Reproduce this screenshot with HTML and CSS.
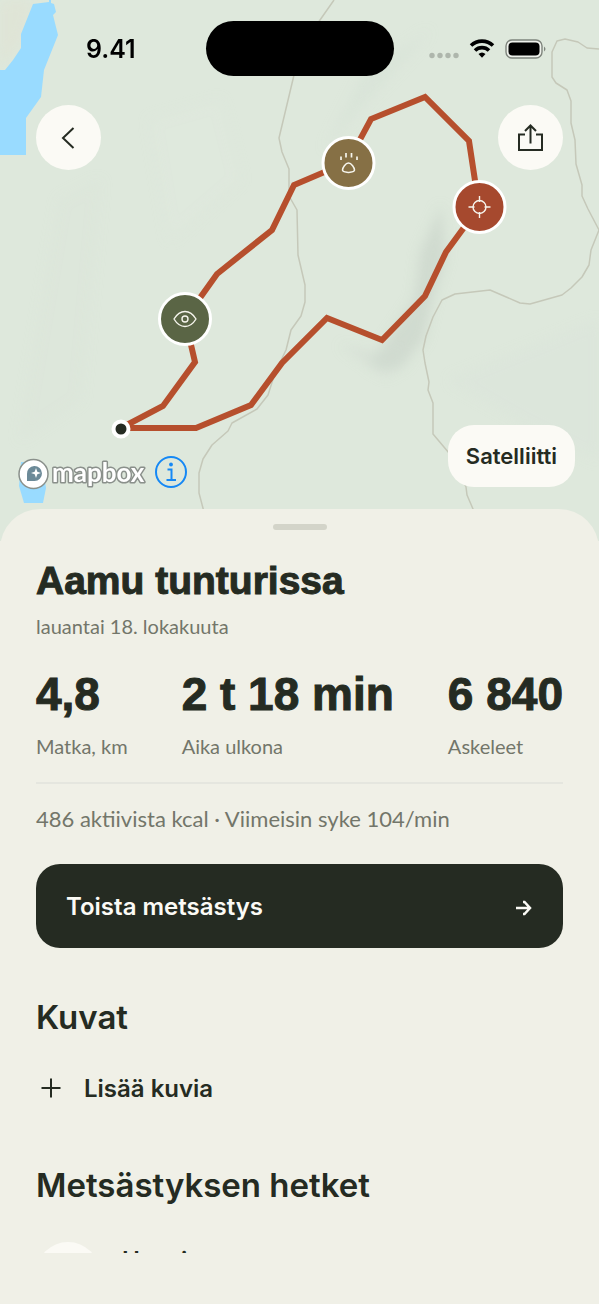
FILE: index.html
```html
<!DOCTYPE html>
<html lang="fi">
<head>
    <meta charset="UTF-8">
    <meta name="viewport" content="width=device-width, initial-scale=1.0">
    <title>Aamu tunturissa</title>
    <link rel="stylesheet" href="styles.css">
</head>
<body>
    <div class="app">
        <!-- Map with the route -->
        <section class="map">
            <svg class="map-canvas" viewBox="0 0 599 541" preserveAspectRatio="xMidYMin slice" aria-hidden="true">
                <defs>
                    <filter id="soft" x="-30%" y="-30%" width="160%" height="160%">
                        <feGaussianBlur stdDeviation="6"/>
                    </filter>
                </defs>
                <rect width="599" height="541" fill="#dee8dc"/>
                <!-- Terrain shading -->
                <g filter="url(#soft)">
                    <path d="M0 0h34L22 42 0 68z" fill="#dfe4d6"/>
                    <path d="M441 205L420 252 414 300 386 340 370 368 400 368 424 340 433 300 446 258z" fill="#c9d4ca" opacity=".65"/>
                    <path d="M340 345L386 376 408 362 398 345 370 352z" fill="#d0dad0" opacity=".6"/>
                    <path d="M430 30L395 70 350 120 325 150 360 80z" fill="#d7e2d7" opacity=".7"/>
                    <path d="M450 380L599 320V460L520 420z" fill="#dae5da" opacity=".6"/>
                    <path d="M60 200L100 180 80 400 20 440z" fill="#dbe6da" opacity=".5"/>
                    <path d="M150 120L220 100 240 180 170 240z" fill="#e0e9dd" opacity=".5"/>
                </g>
                <!-- Lakes -->
                <g fill="#99dbff">
                    <path d="M33 4L49 2V0H51V3L54 4 56 12 53 15 58 35 44 70 41 97 26 118V155H0V70H5L13 60 21 48V34z"/>
                    <path d="M21 462H42L46 488 43 503H24L19 486z"/>
                </g>
                <!-- Trails -->
                <g fill="none" stroke="#c5c8b9" stroke-width="1.5" stroke-linejoin="round">
                    <path d="M334 0L320 20 300 50 294 75 279 138 282 152 289 169V196L297 210 298 255 305 285V302L301 316 291 330 286 350 275 373 268 395 257 409 232 423 228 431 212 445 203 459 199 473V493L204 512 210 541"/>
                    <path d="M599 49L587 48 578 42 565 39 557 41 552 52V77L556 83 567 90 571 101V123L575 140 576 164 582 185V196L588 209 599 230 591 250 589 265 582 277 571 288 562 295 530 304 520 303 490 290 455 294 442 300 433 317 426 336 423 350 425 363 429 382 428 390 433 403V434L449 453 466 487 467 495 473 509 480 530"/>
                </g>
                <!-- Route -->
                <path d="M121 428L163 406 195 362 185 319 217 274 272 230 294 185 348 162 371 119 425 97 469 141 479 207 446 252 425 296 382 340 327 318 282 363 251 405 196 428z" fill="none" stroke="#b64f2d" stroke-width="6" stroke-linejoin="miter"/>
                <circle cx="121" cy="429" r="7.5" fill="#252b22" stroke="#fff" stroke-width="4"/>
                <!-- Sighting -->
                <g transform="translate(185 319)">
                    <circle r="25.5" fill="#5a6545" stroke="#fff" stroke-width="3"/>
                    <g fill="none" stroke="#f6f5ed" stroke-width="1.4">
                        <path d="M-11 0C-8-5-4-7.5 0-7.5S8-5 11 0C8 5 4 7.5 0 7.5S-8 5-11 0z" stroke-linejoin="round"/>
                        <circle r="3"/>
                    </g>
                </g>
                <!-- Track -->
                <g transform="translate(348.5 163)">
                    <circle r="25.5" fill="#867045" stroke="#fff" stroke-width="3"/>
                    <g fill="none" stroke="#f6f5ed">
                        <path d="M-7.5-6.5V-3M-2.5-10V-5.5M3-10V-5.5M8.5-6.5V-3" stroke-width="1.7"/>
                        <path d="M0 0C3 0 6 5 6 7C6 9 3 9 0 9.5C-3 9-6 9-6 7C-6 5-3 0 0 0z" stroke-width="1.5"/>
                    </g>
                </g>
                <!-- Shot -->
                <g transform="translate(479.5 207)">
                    <circle r="25.5" fill="#a6492e" stroke="#fff" stroke-width="3"/>
                    <g fill="none" stroke="#f6f5ed" stroke-width="1.4">
                        <circle r="6.5"/>
                        <path d="M0-11V-5M0 5V11M-11 0H-5M5 0H11"/>
                    </g>
                </g>
            </svg>

            <div class="status-bar">
                <span class="time">9.41</span>
                <span class="island"></span>
                <svg class="status-icons" width="118" height="24" viewBox="0 0 118 24" aria-hidden="true">
                    <g fill="#aeb6ac">
                        <circle cx="3" cy="18.5" r="2.7"/>
                        <circle cx="11" cy="18.5" r="2.7"/>
                        <circle cx="19" cy="18.5" r="2.7"/>
                        <circle cx="27" cy="18.5" r="2.7"/>
                    </g>
                    <g fill="none" stroke="#000" stroke-width="3.6">
                        <path d="M42 8.5A16 16 0 0 1 64 8.5"/>
                        <path d="M46 13.5A10 10 0 0 1 60 13.5"/>
                    </g>
                    <path d="M49.5 17Q53 14 56.5 17L53 20.8z" fill="#000"/>
                    <rect x="77" y="3" width="36" height="18" rx="6" fill="#eff2ec" stroke="#7e847c" stroke-width="1.4"/>
                    <rect x="79.5" y="5.5" width="31" height="13" rx="4" fill="#000"/>
                    <path d="M115 9.5Q118 12 115 14.5z" fill="#7e847c"/>
                </svg>
            </div>

            <div class="map-bar">
                <button class="round-button" type="button" aria-label="Takaisin">
                    <svg width="28" height="28" viewBox="0 0 28 28"><path d="M18.5 4L8 14 18.5 24"/></svg>
                </button>
                <button class="round-button" type="button" aria-label="Jaa">
                    <svg width="28" height="28" viewBox="0 0 28 28"><path d="M8 10.500H2V26H25V10.500H19M13.500 19.500V2M8 7L13.500 1.500L19 7"/></svg>
                </button>
            </div>

            <div class="map-footer">
                <a class="mapbox" href="#" aria-label="Mapbox">
                    <svg width="130" height="34" viewBox="0 0 130 34">
                        <circle cx="15.5" cy="17" r="14.5" fill="#fff" stroke="#8a908b" stroke-width="1.5"/>
                        <path d="M9 24V17A7.5 7.5 0 1 1 16.5 24z" fill="#6c8a98"/>
                        <path d="M18 11L19.3 14.7 23 16 19.3 17.3 18 21 16.7 17.3 13 16 16.7 14.7z" fill="#fff"/>
                        <text class="wordmark" x="34" y="25">mapbox</text>
                    </svg>
                </a>
                <button class="info-button" type="button" aria-label="Tietoja kartasta">
                    <svg width="34" height="34" viewBox="0 0 34 34">
                        <circle cx="17" cy="17" r="15" fill="none" stroke="#1588f5" stroke-width="2"/>
                        <circle cx="17" cy="9.5" r="1.9" fill="#1588f5"/>
                        <path d="M13.5 14.5H17.5V25M12.5 25H22" fill="none" stroke="#1588f5" stroke-width="2"/>
                    </svg>
                </button>
                <button class="layer-button" type="button">Satelliitti</button>
            </div>
        </section>

        <!-- Hunt details -->
        <main class="sheet">
            <div class="handle"></div>
            <h1>Aamu tunturissa</h1>
            <p class="date">lauantai 18. lokakuuta</p>

            <dl class="stats">
                <div class="stat">
                    <dt>Matka, km</dt>
                    <dd>4,8</dd>
                </div>
                <div class="stat">
                    <dt>Aika ulkona</dt>
                    <dd>2 t 18 min</dd>
                </div>
                <div class="stat">
                    <dt>Askeleet</dt>
                    <dd>6 840</dd>
                </div>
            </dl>

            <p class="health">486 aktiivista kcal · Viimeisin syke 104/min</p>

            <button class="replay-button" type="button">
                <span>Toista metsästys</span>
                <svg width="18" height="20" viewBox="0 0 18 20" aria-hidden="true"><path d="M1 12H15M8 6H9.500L15 12L9.500 18H8"/></svg>
            </button>

            <h2>Kuvat</h2>
            <button class="add-button" type="button">
                <svg width="30" height="30" viewBox="0 0 30 30" aria-hidden="true"><path d="M15 5.5V24.5M5.5 15H24.5"/></svg>
                <span>Lisää kuvia</span>
            </button>

            <h2>Metsästyksen hetket</h2>
            <ul class="moments">
                <li class="moment">
                    <span class="moment-icon"></span>
                    <span class="moment-name">Havainto</span>
                </li>
            </ul>
        </main>
    </div>
</body>
</html>
```
FILE: styles.css
```css
* {
    box-sizing: border-box;
}
body {
    margin: 0;
    font-family: Inter, sans-serif;
    color: #252b22;
    background-color: #f0f0e7;
}
button {
    margin: 0;
    padding: 0;
    border: none;
    background: none;
    color: inherit;
    font-family: inherit;
    cursor: pointer;
}
svg {
    display: block;
}
.app {
    display: flex;
    flex-direction: column;
    height: 100vh;
    padding-bottom: 51px;
}

/* Map */
.map {
    position: relative;
    display: flex;
    flex-direction: column;
    flex: none;
    height: 541px;
    padding-bottom: 50px;
}
.map-canvas {
    position: absolute;
    inset: 0;
    z-index: -1;
    width: 100%;
    height: 100%;
}
.status-bar {
    display: grid;
    grid-template-columns: 1fr auto 1fr;
    align-items: center;
    padding-top: 21px;
    color: #000;
}
.time {
    padding-left: 16px;
    justify-self: center;
    font-size: 25px;
    font-weight: 600;
}
.island {
    width: 188px;
    height: 55px;
    border-radius: 28px;
    background-color: #000;
}
.status-icons {
    justify-self: center;
    margin-right: 16px;
}
.map-bar {
    display: flex;
    justify-content: space-between;
    padding: 29px 36px 0;
}
.round-button {
    display: grid;
    place-items: center;
    width: 65px;
    height: 65px;
    border-radius: 50%;
    background-color: #fbfaf5;
}
.round-button path,
.add-button path {
    fill: none;
    stroke: #252b22;
    stroke-width: 2;
}
.map-footer {
    display: flex;
    align-items: center;
    margin-top: auto;
    padding: 0 24px 0 18px;
}
.mapbox {
    margin-top: 36px;
}
.wordmark {
    font-family: Lato, sans-serif;
    font-size: 26px;
    font-weight: 700;
    fill: #fff;
    stroke: #8a908b;
    stroke-width: 3px;
    stroke-linejoin: round;
    paint-order: stroke;
}
.info-button {
    margin: 32px auto 0 6px;
}
.layer-button {
    height: 62px;
    padding: 0 18px;
    border-radius: 26px;
    background-color: #fbfaf5;
    font-size: 22px;
    font-weight: 600;
}

/* Sheet */
.sheet {
    position: relative;
    flex: 1;
    min-height: 0;
    margin-top: -32px;
    padding: 15px 36px 0;
    overflow-y: auto;
    scrollbar-width: none;
    border-radius: 40px 40px 0 0;
    background-color: #f0f0e7;
}
.handle {
    width: 54px;
    height: 6px;
    margin: 0 auto;
    border-radius: 3px;
    background-color: #d3d4c9;
}
h1,
dd {
    font-family: "Liberation Sans", Arial, sans-serif;
    font-weight: 700;
    -webkit-text-stroke: 1px #252b22;
}
h1 {
    margin: 28px 0 0;
    font-size: 39px;
    line-height: 46px;
}
p {
    margin: 0;
    color: #73766a;
}
.date,
.health,
dt {
    font-family: Lato, sans-serif;
}
.date {
    margin-top: 8px;
    font-size: 20px;
    line-height: 28px;
}
.stats {
    display: flex;
    justify-content: space-between;
    margin: 24px 0 0;
    padding-bottom: 22px;
    border-bottom: 2px solid #e5e6df;
}
.stat {
    display: flex;
    flex-direction: column-reverse;
    gap: 8px;
}
dt {
    color: #73766a;
    font-size: 20px;
    line-height: 28px;
}
dd {
    margin: 0;
    font-size: 46px;
    line-height: 60px;
    white-space: nowrap;
}
.health {
    margin-top: 20px;
    font-size: 22px;
    line-height: 30px;
}
.replay-button {
    display: flex;
    align-items: center;
    justify-content: space-between;
    width: 100%;
    height: 84px;
    margin-top: 30px;
    padding: 0 30px;
    border-radius: 24px;
    background-color: #252b22;
    color: #fbfaf5;
    font-size: 24px;
    font-weight: 600;
}
.replay-button path {
    fill: none;
    stroke: #fbfaf5;
    stroke-width: 2.5;
}
h2 {
    margin: 48px 0 0;
    font-size: 33px;
    font-weight: 600;
    line-height: 42px;
}
.add-button {
    display: flex;
    align-items: center;
    gap: 18px;
    height: 56px;
    margin-top: 22px;
    font-size: 24px;
    font-weight: 600;
}
.moments {
    margin: 36px 0 0;
    padding: 0;
    list-style: none;
}
.moment {
    display: flex;
    gap: 22px;
}
.moment-icon {
    width: 64px;
    height: 64px;
    border-radius: 50%;
    background-color: #fbfaf5;
}
.moment-name {
    padding-top: 4px;
    font-size: 24px;
    font-weight: 600;
    line-height: 30px;
}
```
